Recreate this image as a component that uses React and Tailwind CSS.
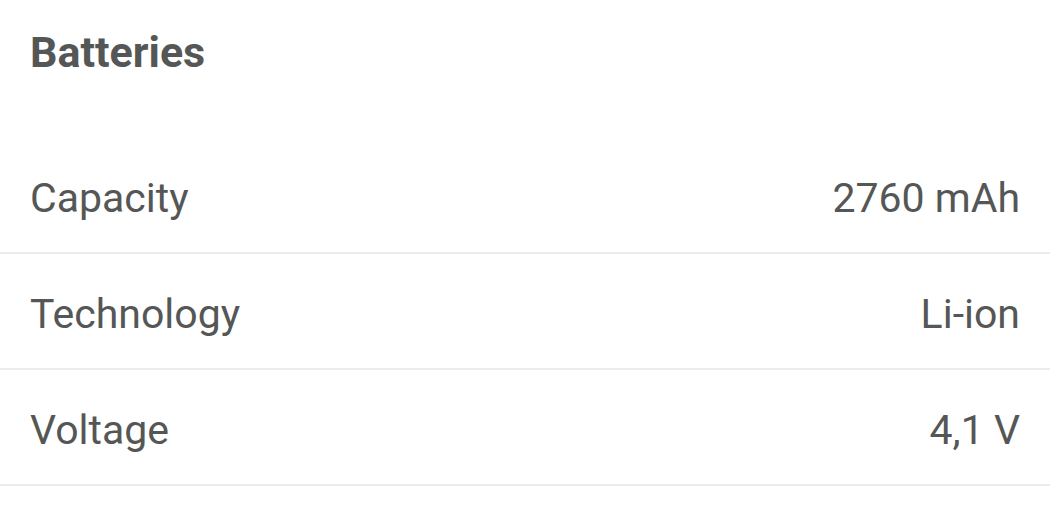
import React from 'react';

const rows = [
    { label: 'Capacity', value: '2760 mAh' },
    { label: 'Technology', value: 'Li-ion' },
    { label: 'Voltage', value: '4,1 V' },
];

const App = () => {
    return (
        <div className="w-[1050px] h-[525px] bg-white overflow-hidden text-[#555756]" style={{ fontFamily: 'Roboto, "Noto Sans", sans-serif' }}>
            {/* Section title */}
            <div className="h-[138px] pt-[31px] px-[30px]">
                <h2 className="text-[43px] leading-none font-bold">Batteries</h2>
            </div>

            {/* Spec rows */}
            {rows.map((row) => (
                <div key={row.label} className="h-[116px] flex items-center justify-between pt-[6px] px-[30px] border-b-2 border-[#ececec]">
                    <span className="text-[41px] leading-none">{row.label}</span>
                    <span className="text-[41px] leading-none">{row.value}</span>
                </div>
            ))}
        </div>
    );
};

export default App;
